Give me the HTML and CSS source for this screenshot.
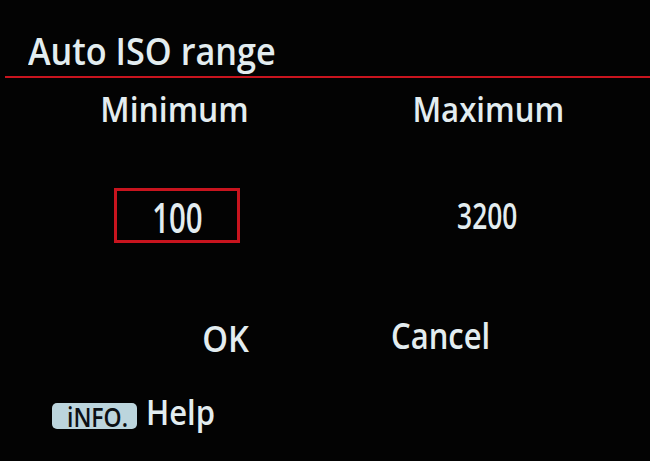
FILE: index.html
```html
<!DOCTYPE html>
<html lang="en">
<head>
<meta charset="utf-8">
<title>Auto ISO range</title>
<link rel="stylesheet" href="styles.css">
</head>
<body>
  <main class="screen">
    <header class="title-bar">
      <h1 class="title"><span class="narrow">Auto ISO range</span></h1>
    </header>
    <div class="rule"></div>

    <section class="range">
      <div class="label"><span class="narrow">Minimum</span></div>
      <div class="label label-max"><span class="narrow">Maximum</span></div>

      <div class="value-cell">
        <div class="value-box selected"><span class="digits big">100</span></div>
      </div>
      <div class="value-cell">
        <div class="value-box"><span class="digits">3200</span></div>
      </div>
    </section>

    <nav class="actions">
      <div class="action action-ok"><span class="narrow">OK</span></div>
      <div class="action action-cancel"><span class="narrow">Cancel</span></div>
    </nav>

    <footer class="help">
      <span class="info-key"><span class="key-label">iNFO.</span></span>
      <span class="help-text"><span class="narrow">Help</span></span>
    </footer>
  </main>
</body>
</html>
```

FILE: styles.css
```css
html, body {
  margin: 0;
  padding: 0;
  background: #030303;
}

.screen {
  width: 650px;
  height: 461px;
  overflow: hidden;
  color: #e3edf0;
  font-family: "Open Sans", "Noto Sans", "DejaVu Sans", sans-serif;
  font-weight: 600;
}

/* condensed look of the camera menu typeface */
.narrow {
  display: inline-block;
  transform: scaleX(0.91);
}

.title-bar {
  padding: 31px 0 0 28px;
}

.title {
  margin: 0;
  font-size: 38px;
  line-height: 38px;
  font-weight: 600;
}

.title .narrow {
  transform-origin: left center;
  transform: scaleX(0.9);
}

.rule {
  margin: 7px 0 0 5px;
  height: 2px;
  background: #c8141e;
}

.range {
  display: grid;
  grid-template-columns: 1fr 1fr;
  padding: 13px 6px 0 18px;
  justify-items: center;
  row-gap: 62px;
}

.label {
  font-size: 35px;
  line-height: 35px;
}

.label-max {
  transform: translateX(1px);
}

.label-max .narrow {
  transform: scaleX(0.89);
}

.value-cell {
  display: flex;
  justify-content: center;
  align-items: center;
  height: 55px;
}

.value-box {
  width: 120px;
  height: 49px;
  border: 3px solid transparent;
  display: flex;
  justify-content: center;
  align-items: center;
}

.value-box.selected {
  border-color: #c8141e;
  transform: translateX(2px);
}

.digits {
  display: inline-block;
  font-size: 36px;
  line-height: 49px;
  transform: scaleX(0.73);
}

.digits.big {
  font-size: 42px;
  transform: scaleX(0.7) translateX(2px) translateY(1px);
}

.actions {
  display: grid;
  grid-template-columns: 215px 215px;
  justify-items: center;
  padding-left: 118px;
  margin-top: 78px;
}

.action {
  font-size: 36px;
  line-height: 36px;
}

.action-cancel {
  transform: translateY(-3px);
}

.action-cancel .narrow {
  transform: scaleX(0.86);
}

.help {
  display: flex;
  align-items: flex-end;
  gap: 9px;
  margin-top: 38px;
  padding-left: 52px;
}

/* INFO button key cap */
.info-key {
  display: inline-flex;
  align-items: center;
  width: 85px;
  height: 26px;
  padding-left: 15px;
  box-sizing: border-box;
  border-radius: 5px;
  background: #bcd5dd;
  color: #0c1014;
}

.key-label {
  display: inline-block;
  font-size: 27px;
  line-height: 26px;
  font-weight: 600;
  transform-origin: left center;
  transform: scaleX(0.85) translateY(1px);
}

.help-text {
  font-size: 34px;
  line-height: 34px;
}

.help-text .narrow {
  transform-origin: left center;
}
```
